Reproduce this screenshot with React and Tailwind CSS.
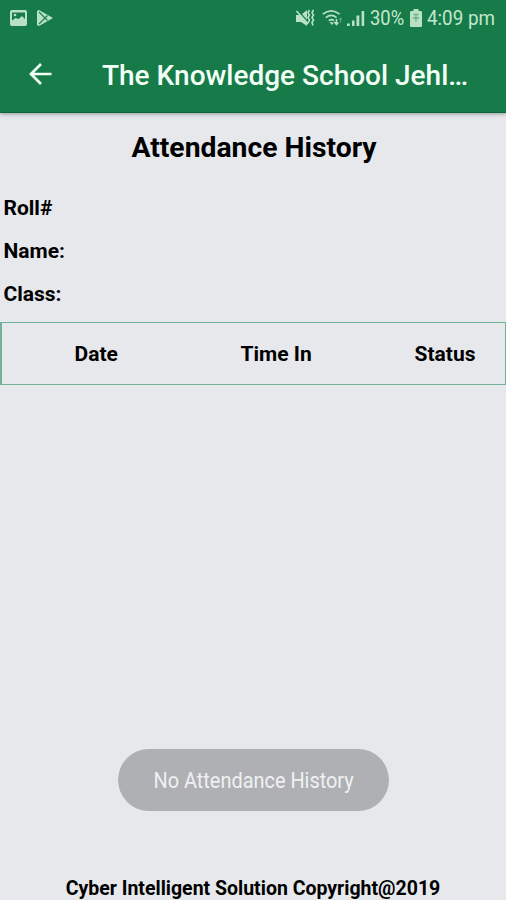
function MuteVibrateIcon() {
  return (
    <svg className="ml-[295px] h-[18px] w-[20px] shrink-0" viewBox="0 0 20 18">
      <path d="M1 6h5l6-5v16l-6-4H1z" fill="#b9e2c5" />
      <path d="M2.500 1 14 14" stroke="#177b49" strokeWidth="1.300" />
      <path d="M1.500 2 13 15" stroke="#b9e2c5" strokeWidth="1.600" />
      <path fill="none" d="m14.500 1-1.500 2.500L14.500 6 13 8.500l1.500 2.500-1.500 3M18.500 1 17 3.500 18.500 6 17 8.500l1.500 2.500-1.500 2.500 1 3" stroke="#b9e2c5" strokeWidth="1.600" />
    </svg>
  );
}

function WifiIcon() {
  return (
    <svg className="ml-[7px] h-[18px] w-[21px] shrink-0" viewBox="0 0 21 18" fill="none" stroke="#b9e2c5">
      <path d="M.8 5.200Q9.200-1.500 17.600 5.200M3.800 8.600q5.400-4.400 10.800 0M6.800 11.700q2.700-2.200 5.200 0" strokeWidth="1.700" />
      <path d="m7.500 13 2.500 3 2-2.500z" fill="#b9e2c5" stroke="none" />
      <path d="M14.500 10v5m-2-2 2 2.500 1.800-2" strokeWidth="1.500" />
      <path d="M18.500 14V9m-1.500 1.800 1.500-2 1.500 2" strokeWidth="1" opacity=".4" />
    </svg>
  );
}

function SignalIcon() {
  return (
    <svg className="ml-[4px] h-[18px] w-[18px] shrink-0" viewBox="0 0 18 18" fill="#b9e2c5">
      <path d="M0 14.500h2.700V17H0zM5 11.500h2.500V17H5zM9.500 6.500h2.800V17H9.500zM14.600 2h2.600v15h-2.600z" />
    </svg>
  );
}

function BatteryIcon() {
  return (
    <svg className="h-[18px] w-[12px] shrink-0" viewBox="0 0 12 18">
      <path d="M3.500 0h5v2H11q1 0 1 1.500v13q0 1.500-1.500 1.500h-9Q0 18 0 16.500v-13Q0 2 1 2h2.500z" fill="#b9e2c5" />
      <path d="M6 5.500v7M3 9h6M3.500 5.500h5" stroke="#6fae88" strokeWidth="1.300" />
    </svg>
  );
}

function StatusBar() {
  return (
    <div className="flex h-[36px] items-center text-[20px] leading-none text-[#c3e7cd]">
      <div className="flex w-0 items-center">
        <svg className="ml-[10px] h-[16px] w-[17px] shrink-0" viewBox="0 0 17 16">
          <path fillRule="evenodd" d="M2 0h13q2 0 2 2v12q0 2-2 2H2q-2 0-2-2V2Q0 0 2 0zm0 2.500v8l3.500-2.500 3 1L12 6l3 3V2.500z" fill="#b9e2c5" />
          <circle cx="5" cy="5" r="1.300" fill="#b9e2c5" />
        </svg>
        <svg className="ml-[10px] h-[16px] w-[16px] shrink-0" viewBox="0 0 16 16">
          <path d="M0 1 2 0l14 8L2 16l-2-1z" fill="#b9e2c5" />
          <path d="m2 2 8.500 8.500M2 14l8.500-8.500" stroke="#177b49" strokeWidth="1.100" />
        </svg>
      </div>
      <MuteVibrateIcon />
      <WifiIcon />
      <SignalIcon />
      <span className="ml-[5px] w-[40px] origin-left scale-x-[.92] whitespace-nowrap">30%</span>
      <BatteryIcon />
      <span className="ml-[5px] origin-left scale-x-[.94] whitespace-nowrap">4:09 pm</span>
    </div>
  );
}

export default function App() {
  return (
    <div className="flex h-[900px] w-[506px] flex-col overflow-hidden bg-[#e7e8ec] font-['Roboto',sans-serif] text-black">
      <header className="h-[113px] shrink-0 border-b border-[#0c673b] bg-[#177b49] shadow-[0_1px_4px_rgba(0,0,0,0.35)]">
        <StatusBar />
        <div className="flex h-[76px] items-center">
          <svg className="ml-[28px] h-[22px] w-[24px] shrink-0" viewBox="0 0 24 22" fill="none" stroke="#f2fff6" strokeWidth="2.700">
            <path d="M23.500 11H2.500M13 1 3 11l10 10" />
          </svg>
          <h1 className="ml-[50px] whitespace-nowrap pt-[3px] text-[28px] font-medium leading-none text-[#f2fff6]">The Knowledge School Jehl…</h1>
        </div>
      </header>
      <h2 className="mt-[18px] text-center text-[28.300px] font-bold leading-[34px]">
        <span className="ml-[2px]">Attendance History</span>
      </h2>
      <div className="mt-[22px] flex flex-col pl-[3.500px] text-[21px] font-bold leading-[43px]">
        <span>Roll#</span>
        <span>Name:</span>
        <span>Class:</span>
      </div>
      <div className="mt-[6px] flex h-[63px] shrink-0 items-center border border-l-2 border-[#70b394] pt-[2px] text-[21px] font-bold">
        <span className="ml-[72.500px] w-[166px]">Date</span>
        <span className="w-[174px]">Time In</span>
        <span>Status</span>
      </div>
      <div className="mt-auto flex h-[62px] w-[271px] shrink-0 items-center justify-center self-center rounded-full bg-[#afb0b4] text-[22px] text-[#eff0f2]">
        <span className="ml-[2px] scale-x-[.905] whitespace-nowrap">No Attendance History</span>
      </div>
      <footer className="mt-[64px] h-[25px] shrink-0 text-center text-[19.500px] font-bold leading-[28px]">Cyber Intelligent Solution Copyright@2019</footer>
    </div>
  );
}
